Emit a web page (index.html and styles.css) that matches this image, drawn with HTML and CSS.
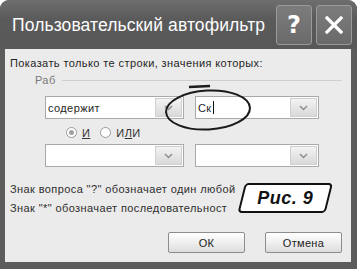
FILE: index.html
```html
<!DOCTYPE html>
<html lang="ru">
<head>
  <meta charset="UTF-8">
  <title>Пользовательский автофильтр</title>
  <link rel="stylesheet" href="styles.css">
</head>
<body>
  <div class="window">
    <div class="titlebar">
      <div class="title">Пользовательский автофильтр</div>
      <div class="tb-btn">?</div>
      <div class="tb-btn close">
        <svg width="20" height="20" viewBox="0 0 20 20"><path d="M3 3 L17 17 M17 3 L3 17" stroke="#fff" stroke-width="3.2" stroke-linecap="square"/></svg>
      </div>
    </div>

    <div class="client">
      <div class="intro">Показать только те строки, значения которых:</div>
      <div class="group">
        <span class="group-name">Раб</span>
        <span class="group-line"></span>
      </div>

      <div class="row">
        <div class="combo wide">
          <span class="combo-text">содержит</span>
          <span class="combo-btn"><svg width="9" height="6" viewBox="0 0 9 6"><path d="M1 1 L4.5 4.5 L8 1" fill="none" stroke="#8a8a8a" stroke-width="1.4"/></svg></span>
        </div>
        <div class="combo narrow">
          <span class="combo-text">Ск<span class="caret"></span></span>
          <span class="combo-btn"><svg width="9" height="6" viewBox="0 0 9 6"><path d="M1 1 L4.5 4.5 L8 1" fill="none" stroke="#8a8a8a" stroke-width="1.4"/></svg></span>
        </div>
      </div>

      <div class="radios">
        <label class="radio"><span class="dot checked"></span><span><u>И</u></span></label>
        <label class="radio"><span class="dot"></span><span>И<u>Л</u>И</span></label>
      </div>

      <div class="row second">
        <div class="combo wide">
          <span class="combo-text"></span>
          <span class="combo-btn"><svg width="9" height="6" viewBox="0 0 9 6"><path d="M1 1 L4.5 4.5 L8 1" fill="none" stroke="#8a8a8a" stroke-width="1.4"/></svg></span>
        </div>
        <div class="combo narrow">
          <span class="combo-text"></span>
          <span class="combo-btn"><svg width="9" height="6" viewBox="0 0 9 6"><path d="M1 1 L4.5 4.5 L8 1" fill="none" stroke="#8a8a8a" stroke-width="1.4"/></svg></span>
        </div>
      </div>

      <div class="hints">
        <div>Знак вопроса "?" обозначает один любой</div>
        <div>Знак "*" обозначает последовательност</div>
      </div>

      <div class="actions">
        <button class="btn">ОК</button>
        <button class="btn">Отмена</button>
      </div>

      <!-- marker drawn over the dialog -->
      <svg class="circle-mark" width="96" height="50" viewBox="0 0 96 50">
        <ellipse cx="48" cy="27" rx="42" ry="19.5" fill="none" stroke="#1a1a1a" stroke-width="2" transform="rotate(-3 48 27)"/>
        <path d="M29 4 L50 3" stroke="#1a1a1a" stroke-width="2.4"/>
      </svg>

      <div class="fig-label"><span>Рис. 9</span></div>
    </div>
  </div>
</body>
</html>
```

FILE: styles.css
```css
body { margin: 0; background: #ffffff; font-family: "Liberation Sans", Arial, sans-serif; }

.window { width: 357px; height: 269px; background: #5c5c5c; border-radius: 9px 9px 0 0; display: flex; flex-direction: column; box-sizing: border-box; }

.titlebar { height: 49px; display: flex; align-items: center; padding: 0 5px 0 12px; gap: 4px; box-sizing: border-box; background: linear-gradient(#6e6e6e, #5a5a5a 40%, #585858); border-radius: 9px 9px 0 0; }
.title { flex: 1; min-width: 0; white-space: nowrap; color: #fdfdfd; font-family: "Liberation Sans", Arial, sans-serif; font-size: 17.5px; letter-spacing: 0.1px; padding-top: 1px; }
.tb-btn { flex: none; width: 34px; height: 38px; border: 1px solid #9a9a9a; border-radius: 3px; background: linear-gradient(#7c7c7c, #6a6a6a); color: #fff; font-family: "DejaVu Sans", sans-serif; font-size: 24px; font-weight: bold; display: flex; align-items: center; justify-content: center; }

.client { position: relative; flex: 1; margin: 0 6px 7px 5px; background: #ebebeb; padding: 0 9px 0 5px; font-size: 11px; letter-spacing: 0.4px; color: #262626; display: flex; flex-direction: column; }

.intro { margin-top: 7px; line-height: 14px; }

.group { margin-top: 3px; height: 14px; display: flex; align-items: center; padding-left: 25px; gap: 6px; }
.group-name { color: #7a7a7a; }
.group-line { flex: 1; height: 1px; background: #cfcfcf; }

.row { margin-top: 9px; padding-left: 35px; display: flex; gap: 11px; }
.row.second { margin-top: 5px; }
.combo { height: 23px; box-sizing: border-box; border: 1px solid #a9a9a9; background: #fff; display: flex; align-items: stretch; }
.combo.wide { width: 139px; }
.combo.narrow { width: 124px; }
.combo-text { flex: 1; display: flex; align-items: center; padding-left: 2px; }
.caret { display: inline-block; width: 1px; height: 13px; background: #111; margin-left: 1px; }
.combo-btn { width: 25px; margin: 1px; background: linear-gradient(#f3f3f3, #d9d9d9); border: 1px solid #d0d0d0; display: flex; align-items: center; justify-content: center; }

.radios { margin-top: 7px; height: 13px; display: flex; gap: 10px; padding-left: 56px; }
.radio { display: flex; align-items: center; gap: 5px; color: #333; }
.dot { width: 11px; height: 11px; border: 1px solid #9a9a9a; border-radius: 50%; background: #fff; box-sizing: border-box; position: relative; }
.dot.checked::after { content: ""; position: absolute; left: 2px; top: 2px; width: 5px; height: 5px; border-radius: 50%; background: #a0a0a0; }

.hints { margin-top: 13px; line-height: 19px; color: #2e2e2e; }

.actions { margin-top: 14px; display: flex; justify-content: flex-end; gap: 20px; }
.btn { width: 77px; height: 21px; font-family: "Liberation Sans", Arial, sans-serif; font-size: 11px; letter-spacing: 0.3px; color: #222; border: 1px solid #8d8d8d; border-radius: 2px; background: linear-gradient(#ffffff, #ececec 60%, #dcdcdc); padding: 0; }

.circle-mark { position: absolute; left: 155px; top: 34px; }

.fig-label { position: absolute; left: 240px; top: 134px; width: 88px; height: 30px; box-sizing: border-box; border: 2px solid #111; border-radius: 4px; background: #fff; transform: skewX(-14deg); transform-origin: left top; display: flex; align-items: center; justify-content: center; letter-spacing: 0.5px; }
.fig-label span { transform: skewX(14deg); font-size: 18px; font-weight: bold; font-style: italic; color: #111; }
```
